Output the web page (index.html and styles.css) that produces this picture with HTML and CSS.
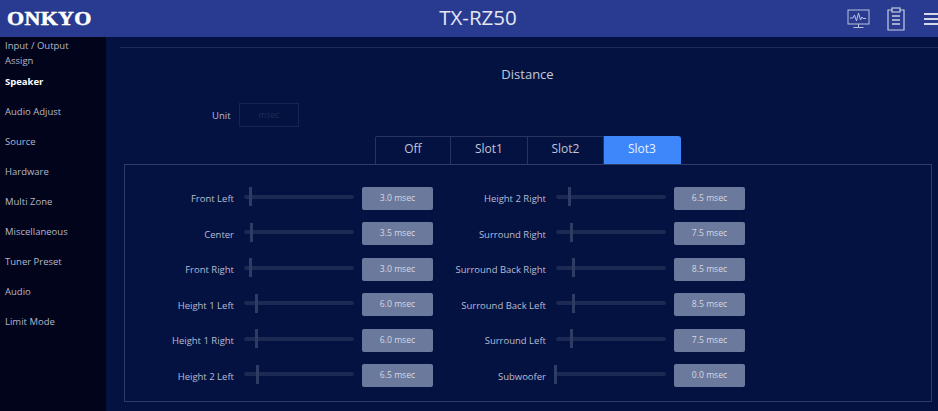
FILE: index.html
```html
<!DOCTYPE html>
<html lang="en">
<head>
<meta charset="utf-8">
<title>TX-RZ50</title>
<link rel="stylesheet" href="styles.css">
</head>
<body>
<div class="app">
  <header class="topbar">
    <div class="logo">ONKYO</div>
    <div class="model">TX-RZ50</div>
    <div class="tools">
      <svg class="ico-monitor" width="23" height="20" viewBox="0 0 23 20" fill="none" stroke="#bcc3dc" stroke-width="1">
        <rect x="1" y="1" width="21" height="14"/>
        <path d="M3 9h3l1.5-3 2 6 2-8 2 7 1.5-3 1 1.5h3"/>
        <path d="M11.5 15v3M6.5 18.5h10"/>
      </svg>
      <svg class="ico-clip" width="18" height="24" viewBox="0 0 18 24" fill="none" stroke="#c8cee2" stroke-width="1.2">
        <path d="M5 3H1v20h16V3h-4"/>
        <rect x="5" y="1" width="8" height="4" fill="#283b90"/>
        <path d="M5 9h8M5 13h8M5 17h8" stroke-width="1.3"/>
      </svg>
      <div class="burger"><span></span><span></span><span></span></div>
    </div>
  </header>
  <div class="body">
    <nav class="side">
      <a class="nav-item two">Input / Output<br>Assign</a>
      <a class="nav-item active">Speaker</a>
      <a class="nav-item">Audio Adjust</a>
      <a class="nav-item">Source</a>
      <a class="nav-item">Hardware</a>
      <a class="nav-item">Multi Zone</a>
      <a class="nav-item">Miscellaneous</a>
      <a class="nav-item">Tuner Preset</a>
      <a class="nav-item">Audio</a>
      <a class="nav-item">Limit Mode</a>
    </nav>
    <main class="main">
      <h1 class="title">Distance</h1>
      <div class="unit"><span class="unit-label">Unit</span><span class="unit-box">msec</span></div>
      <div class="tabs">
        <div class="tab">Off</div>
        <div class="tab">Slot1</div>
        <div class="tab">Slot2</div>
        <div class="tab on">Slot3</div>
      </div>
      <section class="panel">
        <div class="row"><span class="lbl">Front Left</span><span class="track"><i class="thumb" style="left:4.5px"></i></span><span class="val">3.0 msec</span></div>
        <div class="row"><span class="lbl">Height 2 Right</span><span class="track"><i class="thumb" style="left:11.5px"></i></span><span class="val">6.5 msec</span></div>
        <div class="row"><span class="lbl">Center</span><span class="track"><i class="thumb" style="left:5.5px"></i></span><span class="val">3.5 msec</span></div>
        <div class="row"><span class="lbl">Surround Right</span><span class="track"><i class="thumb" style="left:14px"></i></span><span class="val">7.5 msec</span></div>
        <div class="row"><span class="lbl">Front Right</span><span class="track"><i class="thumb" style="left:4.5px"></i></span><span class="val">3.0 msec</span></div>
        <div class="row"><span class="lbl">Surround Back Right</span><span class="track"><i class="thumb" style="left:16px"></i></span><span class="val">8.5 msec</span></div>
        <div class="row"><span class="lbl">Height 1 Left</span><span class="track"><i class="thumb" style="left:11px"></i></span><span class="val">6.0 msec</span></div>
        <div class="row"><span class="lbl">Surround Back Left</span><span class="track"><i class="thumb" style="left:16px"></i></span><span class="val">8.5 msec</span></div>
        <div class="row"><span class="lbl">Height 1 Right</span><span class="track"><i class="thumb" style="left:11px"></i></span><span class="val">6.0 msec</span></div>
        <div class="row"><span class="lbl">Surround Left</span><span class="track"><i class="thumb" style="left:14px"></i></span><span class="val">7.5 msec</span></div>
        <div class="row"><span class="lbl">Height 2 Left</span><span class="track"><i class="thumb" style="left:11.5px"></i></span><span class="val">6.5 msec</span></div>
        <div class="row"><span class="lbl">Subwoofer</span><span class="track"><i class="thumb" style="left:-2px"></i></span><span class="val">0.0 msec</span></div>
      </section>
    </main>
  </div>
</div>
</body>
</html>
```
FILE: styles.css
```css
* { box-sizing: border-box; }
html, body { margin: 0; height: 100%; overflow: hidden; }
body { font-family: "Open Sans", "Noto Sans", sans-serif; background: #041242; color: #aab1c8; }
.app { width: 938px; height: 411px; display: flex; flex-direction: column; overflow: hidden; }

.topbar { height: 37px; flex: none; background: #283b90; display: grid; grid-template-columns: 1fr auto 1fr; align-items: center; padding-left: 7px; }
.logo { font-family: "Liberation Serif", serif; font-weight: 700; font-size: 18px; letter-spacing: 0.3px; color: #fff; transform: scaleX(1.22); transform-origin: left center; line-height: 1; -webkit-text-stroke: 0.5px #fff; }
.model { font-size: 20.5px; color: #e4e7f2; margin: -2px 0 0 11px; line-height: 1; }
.tools { display: flex; align-items: center; justify-content: flex-end; overflow: hidden; }
.ico-monitor { margin-right: 17px; }
.ico-clip { margin-right: 19px; }
.burger { width: 14px; display: flex; flex-direction: column; gap: 3px; }
.burger span { height: 2px; background: #d5d9ea; }

.body { flex: 1; display: flex; min-height: 0; }
.side { width: 106px; flex: none; background: #02041c; padding: 1px 0 0 5px; font-size: 9.5px; line-height: 15px; }
.nav-item { display: block; height: 30px; color: #b3b8c8; white-space: nowrap; }
.nav-item.two { height: 36px; }
.nav-item.active { color: #fff; font-weight: 700; }

.main { flex: 1; padding: 10px 7px 0 14px; display: flex; flex-direction: column; min-width: 0; position: relative; }
.main::before { content: ""; height: 1px; background: #1e2b58; margin-right: -7px; flex: none; }
.title { margin: 17px 0 0 4px; font-size: 13px; font-weight: 400; line-height: 18px; text-align: center; color: #c4c9d8; }
.unit { display: flex; align-items: center; height: 24px; margin-top: 20px; padding-left: 92px; }
.unit-label { font-size: 9.5px; color: #b7bdd0; width: 27px; }
.unit-box { width: 60px; height: 24px; border: 1px solid #17244f; font-size: 8.5px; line-height: 22px; text-align: center; color: #1f2c58; }

.tabs { display: flex; margin: 9px 0 0 254.7px; height: 28px; }
.tab { width: 76.5px; border: 1px solid #27345f; border-bottom: 0; font-size: 12px; line-height: 24px; text-align: center; color: #c0c5d6; }
.tab + .tab { border-left: 0; }
.tab:first-child { border-radius: 2px 0 0 0; }
.tab.on { background: #3d87fb; border-color: #3d87fb; color: #e8f0ff; border-radius: 0 3px 0 0; }

.panel { margin: 0 -1px 0 4px; height: 238px; border: 1px solid #2f3b66; padding: 16px 0 0 0; display: grid; grid-template-columns: 308px 312px; grid-auto-rows: 35.5px; align-content: start; }
.row { display: flex; align-items: center; height: 23.4px; margin-top: 5.5px; }
.lbl { flex: 1; text-align: right; font-size: 9.5px; color: #b7bdd2; white-space: nowrap; margin-right: 10px; padding-top: 1px; }
.track { position: relative; width: 110px; height: 4px; border-radius: 2px; background: #1c2952; flex: none; margin: -3px 8px 0 0; }
.thumb { position: absolute; top: -7.5px; width: 3px; height: 19px; background: #2e3c64; }
.val { width: 71px; height: 23.4px; flex: none; background: #6b7a9c; border-radius: 2px; font-size: 8.6px; line-height: 23px; text-align: center; color: #d4d8e3; }
```
